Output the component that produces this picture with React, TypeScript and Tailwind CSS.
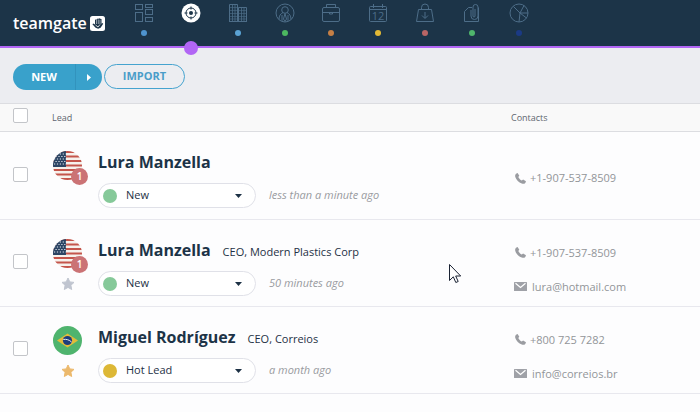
import type { ReactNode } from "react";
import clsx from "clsx";

type Lead = {
  name: string;
  role?: string;
  flag: "us" | "br";
  badge?: number;
  starred?: boolean;
  status: string;
  ago: string;
  phone: string;
  email?: string;
};

const leads: Lead[] = [
  {
    name: "Lura Manzella",
    flag: "us",
    badge: 1,
    status: "New",
    ago: "less than a minute ago",
    phone: "+1-907-537-8509",
  },
  {
    name: "Lura Manzella",
    role: "CEO, Modern Plastics Corp",
    flag: "us",
    badge: 1,
    starred: false,
    status: "New",
    ago: "50 minutes ago",
    phone: "+1-907-537-8509",
    email: "lura@hotmail.com",
  },
  {
    name: "Miguel Rodríguez",
    role: "CEO, Correios",
    flag: "br",
    starred: true,
    status: "Hot Lead",
    ago: "a month ago",
    phone: "+800 725 7282",
    email: "info@correios.br",
  },
];

const navItems: { label: string; dot: string; icon: ReactNode }[] = [
  {
    label: "Dashboard",
    dot: "bg-[#4f94cf]",
    icon: (
      <>
        <rect x="1.5" y="1.5" width="7" height="5" />
        <rect x="11.5" y="1.5" width="7" height="3" />
        <rect x="11.5" y="6.5" width="7" height="5" />
        <rect x="1.5" y="9.5" width="7" height="9" />
        <rect x="11.5" y="14.5" width="7" height="4" />
      </>
    ),
  },
  { label: "Leads", dot: "", icon: null },
  {
    label: "Companies",
    dot: "bg-[#5ba3d4]",
    icon: (
      <>
        <path d="M1.5 18.5v-17h8v17M10.5 18.5v-14h8v14M1 18.5h18" />
        <path d="M4.5 2v16M7 2v16M13.5 5v13M16 5v13" strokeWidth="0.8" />
        <path
          d="M2 4.5h7M2 7.5h7M2 10.5h7M2 13.5h7M2 16h7M11 7.5h7M11 10.5h7M11 13.5h7M11 16h7"
          strokeWidth="0.6"
        />
      </>
    ),
  },
  {
    label: "People",
    dot: "bg-[#4cb860]",
    icon: (
      <>
        <circle cx="10" cy="10" r="9" />
        <circle cx="10" cy="7" r="3.3" />
        <path d="M4 16.5c0-4 1.500-5.500 4-7M16 16.500c0-4-1.500-5.500-4-7M10 10.500l-1.500 5.500 1.500 2.500 1.500-2.500zM7 12v6M13 12v6" />
      </>
    ),
  },
  {
    label: "Deals",
    dot: "bg-[#c57f45]",
    icon: (
      <>
        <rect x="1.5" y="4.5" width="17" height="14" rx="1.5" />
        <path d="M5.5 4V1.5h9V4M1.5 9.5h17M8.500 9.500h3v1.500h-3z" />
      </>
    ),
  },
  {
    label: "Calendar",
    dot: "bg-[#e3b935]",
    icon: (
      <>
        <rect x="1.5" y="3.5" width="17" height="15" rx="1" />
        <path d="M1.5 6.5h17M5.500 1v4M14.500 1v4" />
        <text
          x="10"
          y="17"
          textAnchor="middle"
          fontSize="11"
          fill="currentColor"
          stroke="none"
        >
          12
        </text>
      </>
    ),
  },
  {
    label: "Products",
    dot: "bg-[#b96565]",
    icon: (
      <path d="M3.500 6.500h13l2 12h-17zM6.500 6.500V4.500a3.500 3.500 0 0 1 7 0v2M10 9v6M7 12.500l3 3 3-3" />
    ),
  },
  {
    label: "Files",
    dot: "bg-[#4fb56c]",
    icon: (
      <>
        <path d="M10 4.500H6.500l-4 4v10h14v-14" />
        <path d="M13 6v7a1 1 0 0 1-2 0V4a2.500 2.500 0 0 1 5 0v9a3.500 3.500 0 0 1-7 0V7" />
      </>
    ),
  },
  {
    label: "Insights",
    dot: "bg-[#1b3a85]",
    icon: (
      <>
        <circle cx="10" cy="10" r="9" />
        <path d="M11 10L4.500 3.500M11 10l4-7.500M11 10h8M11 10l6.500 5M11 10l-1 9" />
      </>
    ),
  },
];

function TargetIcon() {
  return (
    <svg viewBox="0 0 20 20" className="size-5" fill="none" stroke="#1c3448">
      <circle cx="10" cy="10" r="9.5" fill="#fff" stroke="none" />
      <circle cx="10" cy="10" r="5" />
      <circle cx="10" cy="10" r="2" fill="#1c3448" stroke="none" />
      <path d="M10 3.500v3M10 13.500v3M3.500 10h3M13.500 10h3" />
    </svg>
  );
}

function Logo() {
  return (
    <a
      href="#"
      className="flex w-[108px] shrink-0 items-center gap-[3px] pl-[13px] text-base leading-5 font-semibold text-white"
    >
      teamgate
      <svg viewBox="0 0 15 15" className="size-[15px] shrink-0">
        <rect width="15" height="15" rx="2.5" fill="#fff" />
        <path
          d="M5 4l1-.7.8.4.8-1.200 1.200.3.800-.5 1.200.6.700.2v4.600l.9-.8.8.9-2.600 4-2.500.9-2.500-.9-3.200-3.500.9-.8 1.700 1z"
          fill="#1c3448"
        />
        <path d="M6.500 4v4M8.300 3.500V8M10 3.800V8" stroke="#fff" strokeWidth="0.5" />
        <path d="M5.500 9l2.500 2 2-2.500" stroke="#fff" fill="none" strokeWidth="0.8" />
      </svg>
    </a>
  );
}

function UsFlag() {
  return (
    <svg viewBox="0 0 29 29" className="size-[29px]">
      <clipPath id="us-round">
        <circle cx="14.5" cy="14.5" r="14.5" />
      </clipPath>
      <g clipPath="url(#us-round)">
        <rect width="29" height="29" fill="#f6f1ec" />
        <path
          d="M0 1h29M0 5.500h29M0 10h29M0 14.500h29M0 19h29M0 23.500h29M0 28h29"
          stroke="#c4554b"
          strokeWidth="2.2"
        />
        <rect width="13" height="16" fill="#2c4564" />
        <path
          d="M1 3h12M2.500 5.500h11M1 8h12M2.500 10.500h11M1 13h12"
          stroke="#e6eaf0"
          strokeWidth="1.2"
          strokeDasharray="1.2 1.7"
        />
      </g>
    </svg>
  );
}

function BrFlag() {
  return (
    <svg viewBox="0 0 29 29" className="size-[29px]">
      <circle cx="14.5" cy="14.5" r="14.5" fill="#4fb46e" />
      <path d="M4 14.500L14.500 7.500 25 14.500 14.500 21.500z" fill="#e2bb3a" />
      <circle cx="14.5" cy="14.5" r="4.6" fill="#1d3d7c" />
      <path d="M10.300 13.500c3-.6 6 .4 8.300 2.500" stroke="#e6eaf0" fill="none" />
    </svg>
  );
}

function Star({ on }: { on: boolean }) {
  return (
    <svg
      viewBox="0 0 14 14"
      className={clsx("size-3.5", on ? "text-[#ecb96c]" : "text-[#c0c5d0]")}
    >
      <path
        d="M7 1l1.800 3.900 4.200.5-3.100 2.900.8 4.200L7 10.400l-3.700 2.100.8-4.200L1 5.400l4.200-.5z"
        fill="currentColor"
        stroke="currentColor"
        strokeLinejoin="round"
      />
    </svg>
  );
}

function PhoneIcon() {
  return (
    <svg viewBox="0 0 11 11" className="mr-1 size-[11px]">
      <path
        d="M1 .8L2.600 0 4.300 2.700 3.300 4c.7 1.600 1.900 2.800 3.500 3.600l1.300-1L11 8.300l-.7 1.700c-.8.900-2.200 1.100-3.500.6C3.800 9.500 1.200 6.800.3 4-.1 2.700.2 1.500 1 .8z"
        fill="#9a9ca1"
      />
    </svg>
  );
}

function MailIcon() {
  return (
    <svg viewBox="0 0 13 9" className="mr-[5px] h-[9px] w-[13px]">
      <rect width="13" height="9" rx="0.5" fill="#9fa1a7" />
      <path d="M1.500 1.200L6.500 5.500l5-4.300" stroke="#fff" fill="none" strokeWidth="1.2" />
    </svg>
  );
}

function Check({ label }: { label: string }) {
  return (
    <input
      type="checkbox"
      aria-label={label}
      className="block size-[15px] appearance-none rounded-[2px] border border-[#c3c5c9] bg-white checked:bg-[#39a1cb]"
    />
  );
}

function StatusSelect({ status, name }: { status: string; name: string }) {
  return (
    <div className="relative w-[158px]">
      <select
        aria-label={`Status of ${name}`}
        defaultValue={status}
        className="block h-[25px] w-full appearance-none rounded-full border border-[#e0e1e8] bg-white pl-[27px] text-[11px] text-[#1d3145]"
      >
        <option>New</option>
        <option>Hot Lead</option>
      </select>
      <span
        className={clsx(
          "pointer-events-none absolute top-[6px] left-[5px] size-3.5 rounded-full",
          status === "New" ? "bg-[#86c999]" : "bg-[#ddb836]"
        )}
      />
      <svg viewBox="0 0 7 4" className="pointer-events-none absolute top-[11px] right-3.5 h-1 w-[7px]">
        <path d="M0 0h7L3.500 4z" fill="#1d3145" />
      </svg>
    </div>
  );
}

function LeadRow({ lead }: { lead: Lead }) {
  return (
    <tr className="h-[87px] border-b border-[#e8e8ee] first:h-22">
      <td className="pb-[2px] pl-[13px]">
        <Check label={`Select ${lead.name}`} />
      </td>
      <td className="pt-[19px] align-top">
        <div className="flex">
          <div className="flex w-[31px] shrink-0 flex-col items-center gap-[9px]">
            <div className="relative">
              {lead.flag === "us" ? <UsFlag /> : <BrFlag />}
              {lead.badge && (
                <span className="absolute -right-1.5 -bottom-[5px] flex size-[17px] items-center justify-center rounded-full bg-[#cb7375] text-[10px] font-semibold text-white">
                  {lead.badge}
                </span>
              )}
            </div>
            {lead.starred !== undefined && (
              <button aria-label="Favourite">
                <Star on={lead.starred} />
              </button>
            )}
          </div>
          <div className="pl-[15px]">
            <div className="flex h-[22px] items-baseline gap-3 leading-[22px]">
              <a href="#" className="text-base leading-[22px] font-bold text-[#1c3347]">
                {lead.name}
              </a>
              {lead.role && <span className="text-[11px] text-[#1d3145]">{lead.role}</span>}
            </div>
            <div className="mt-[10px] flex items-center gap-[13px]">
              <StatusSelect status={lead.status} name={lead.name} />
              <span className="text-[11px] text-[#999ba0] italic">{lead.ago}</span>
            </div>
          </div>
        </div>
      </td>
      <td className={lead.email ? "pt-3.5" : "pt-1.5"}>
        <div className="flex flex-col gap-4 pl-[3px] text-[11px] leading-[18px] text-[#929599]">
          <a href="#" className="flex items-center pl-px">
            <PhoneIcon />
            {lead.phone}
          </a>
          {lead.email && (
            <a href="#" className="flex items-center">
              <MailIcon />
              {lead.email}
            </a>
          )}
        </div>
      </td>
    </tr>
  );
}

export default function App() {
  return (
    <div className="min-h-screen bg-[#fdfdfe] font-['Open_Sans',sans-serif]">
      <header className="flex h-12 border-b-2 border-[#b266f5] bg-[#1c3448]">
        <Logo />
        <nav className="ml-[13px] grid w-[421px] grid-cols-9">
          {navItems.map((item) => (
            <a
              key={item.label}
              href="#"
              aria-label={item.label}
              className="relative flex flex-col items-center pt-[3px] text-[#4d6d88]"
            >
              {item.icon ? (
                <>
                  <svg viewBox="0 0 20 20" className="size-5" fill="none" stroke="currentColor">
                    {item.icon}
                  </svg>
                  <span className={clsx("mt-[7px] size-1.5 rounded-full", item.dot)} />
                </>
              ) : (
                <>
                  <TargetIcon />
                  <span className="absolute -bottom-[9px] size-3.5 rounded-full bg-[#b266f5]" />
                </>
              )}
            </a>
          ))}
        </nav>
      </header>

      {/* Toolbar */}
      <div className="flex items-start gap-[2px] border-b border-[#dcdde1] bg-[#ecedf1] px-[13px] pt-4 pb-[13px] text-[11px] font-bold">
        <div className="flex h-[26px] w-[89px] overflow-hidden rounded-full bg-[#39a1cb] text-white">
          <button className="flex-1">NEW</button>
          <button
            aria-label="More options"
            className="flex w-[27px] items-center justify-center border-l border-[#3293bd]"
          >
            <svg viewBox="0 0 4 7" className="h-[7px] w-1">
              <path d="M0 0v7l4-3.500z" fill="#fff" />
            </svg>
          </button>
        </div>
        <button className="h-[25px] w-[81px] rounded-full border border-[#45a3cf] text-[#4a9dc9]">
          IMPORT
        </button>
      </div>

      <table className="w-full table-fixed text-left">
        <thead className="bg-[#f9f9f9] text-[9px] text-[#606670]">
          <tr className="h-[27px] border-b border-[#dcdde1]">
            <th className="w-[52px] pb-1 pl-[13px]">
              <Check label="Select all leads" />
            </th>
            <th className="font-normal">Lead</th>
            <th className="w-[189px] font-normal">Contacts</th>
          </tr>
        </thead>
        <tbody>
          {leads.map((lead, i) => (
            <LeadRow key={i} lead={lead} />
          ))}
        </tbody>
      </table>

      {/* Mouse pointer */}
      <svg viewBox="0 0 12 20" className="pointer-events-none absolute top-[264px] left-[449px] h-5 w-3">
        <path
          d="M.5.5v16l3.800-3.700 2.500 5.700 2.400-1-2.500-5.500h5z"
          fill="#fff"
          stroke="#1a2233"
        />
      </svg>
    </div>
  );
}
